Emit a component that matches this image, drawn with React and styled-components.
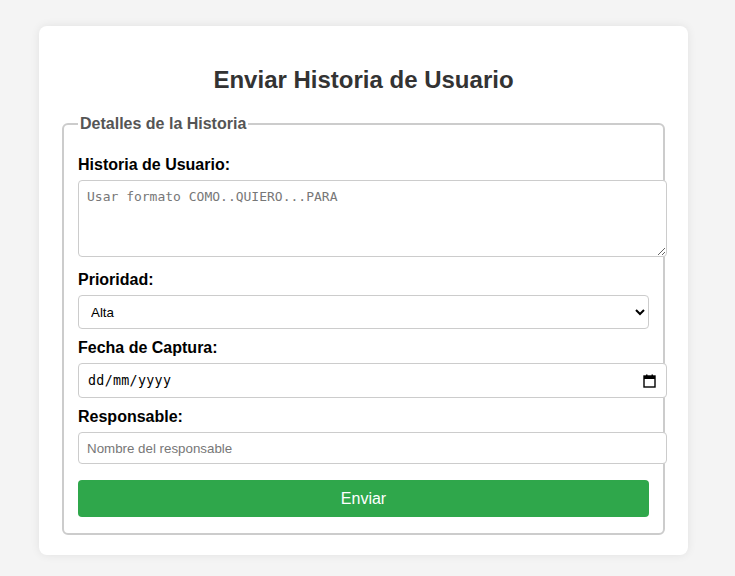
import styled, { createGlobalStyle } from 'styled-components';

const GlobalStyle = createGlobalStyle`
  body {
    margin: 0;
    padding: 26px 0 22px 39px;
    background: #f4f4f4;
    font-family: "Liberation Sans", Arial, sans-serif;
  }
`;

const Card = styled.div`
  width: 649px;
  box-sizing: border-box;
  background: #fff;
  border-radius: 8px;
  box-shadow: 0 0 10px rgba(0, 0, 0, 0.08);
  padding: 20px 23px;
`;

const Title = styled.h2`
  margin: 20px 0 21px;
  text-align: center;
  font-size: 24px;
  line-height: 28px;
  font-weight: bold;
  color: #333;
`;

const Fieldset = styled.fieldset`
  margin: 0;
  border: 2px solid #ccc;
  border-radius: 6px;
  padding: 14px 14px 16px;
  display: flex;
  flex-direction: column;
`;

const Legend = styled.legend`
  padding: 0 2px;
  font-size: 16px;
  font-weight: bold;
  color: #555;
`;

const Label = styled.label`
  display: block;
  font-size: 16px;
  line-height: 18px;
  font-weight: bold;
  color: #000;
  margin: ${({ $first }) => ($first ? '9px' : '0')} 0 6px;
`;

const fieldBase = `
  display: block;
  box-sizing: border-box;
  border: 1px solid #ccc;
  border-radius: 4px;
  background: #fff;
  padding: 8px;
  outline: none;
`;

const TextArea = styled.textarea`
  ${fieldBase}
  width: calc(100% + 18px);
  height: 77px;
  margin-bottom: 14px;
  font-family: "DejaVu Sans Mono", "Liberation Mono", monospace;
  font-size: 13px;
  color: #333;
  resize: vertical;
  &::placeholder {
    color: #777;
  }
`;

const Select = styled.select`
  ${fieldBase}
  width: 100%;
  height: 34px;
  margin-bottom: 10px;
  font-family: "Liberation Sans", Arial, sans-serif;
  font-size: 13.33px;
  color: #000;
`;

const Input = styled.input`
  ${fieldBase}
  width: calc(100% + 18px);
  height: 32px;
  margin-bottom: 16px;
  font-family: "Liberation Sans", Arial, sans-serif;
  font-size: 13.33px;
  color: #000;
  &::placeholder {
    color: #777;
  }
`;

const DateField = styled.div`
  ${fieldBase}
  width: calc(100% + 18px);
  height: 35px;
  margin-bottom: 10px;
  padding: 0 10px 0 9px;
  display: flex;
  align-items: center;
  gap: 8px;
`;

const DateText = styled.input`
  flex: 1;
  min-width: 0;
  border: none;
  outline: none;
  padding: 0;
  background: transparent;
  font-family: "DejaVu Sans Mono", "Liberation Mono", monospace;
  font-size: 13.33px;
  letter-spacing: 0.3px;
  color: #000;
  &::placeholder {
    color: #000;
  }
`;

const Button = styled.button`
  width: 100%;
  height: 37px;
  border: none;
  border-radius: 4px;
  background: #2fa74b;
  color: #fff;
  font-family: "Liberation Sans", Arial, sans-serif;
  font-size: 16px;
  cursor: pointer;
`;

const CalendarIcon = () => (
  <svg width="13" height="14" viewBox="0 0 13 14" fill="none">
    <rect x="1" y="2" width="11" height="11" stroke="#000" strokeWidth="1.4" />
    <rect x="1" y="2" width="11" height="3" fill="#000" />
    <rect x="3" y="0.5" width="1.5" height="2.5" fill="#000" />
    <rect x="8.5" y="0.5" width="1.5" height="2.5" fill="#000" />
  </svg>
);

export default function App() {
  return (
    <>
      <GlobalStyle />
      <Card>
        <Title>Enviar Historia de Usuario</Title>
        <form onSubmit={(e) => e.preventDefault()}>
          <Fieldset>
            <Legend>Detalles de la Historia</Legend>
            <Label $first htmlFor="historia">Historia de Usuario:</Label>
            <TextArea id="historia" placeholder="Usar formato COMO..QUIERO...PARA" />
            <Label htmlFor="prioridad">Prioridad:</Label>
            <Select id="prioridad" defaultValue="Alta">
              <option>Alta</option>
              <option>Media</option>
              <option>Baja</option>
            </Select>
            <Label htmlFor="fecha">Fecha de Captura:</Label>
            <DateField>
              <DateText id="fecha" type="text" placeholder="dd/mm/yyyy" />
              <CalendarIcon />
            </DateField>
            <Label htmlFor="responsable">Responsable:</Label>
            <Input id="responsable" type="text" placeholder="Nombre del responsable" />
            <Button type="submit">Enviar</Button>
          </Fieldset>
        </form>
      </Card>
    </>
  );
}
